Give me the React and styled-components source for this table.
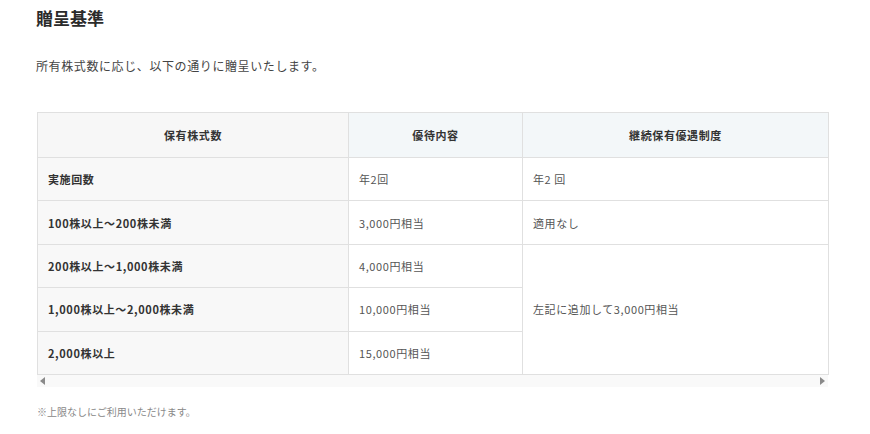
import React from "react";
import styled, { createGlobalStyle } from "styled-components";

const GlobalStyle = createGlobalStyle`
  html, body {
    margin: 0;
    padding: 0;
    background: #ffffff;
  }
  body {
    font-family: "Noto Sans CJK JP", "Noto Sans", sans-serif;
    color: #333;
  }
`;

const Page = styled.main`
  padding: 6px 42px 0 36px;
`;

const Title = styled.h2`
  margin: 0;
  font-size: 17px;
  line-height: 24px;
  font-weight: 700;
  color: #2b2b2b;
`;

const Lead = styled.p`
  margin: 26px 0 0;
  font-size: 12px;
  line-height: 20px;
  letter-spacing: 0.6px;
  color: #444;
`;

const Scroller = styled.div`
  margin: 36px 0 0 1px;
`;

const Table = styled.table`
  width: 791px;
  border-collapse: collapse;
  table-layout: fixed;
  font-size: 11px;
  letter-spacing: 0.6px;
`;

const Head = styled.th`
  height: 44px;
  padding: 0 10px;
  border: 1px solid #e0e0e0;
  background: ${(p) => (p.$tint ? "#f3f7f9" : "#f7f7f7")};
  color: #333;
  font-weight: 700;
  text-align: center;
`;

const Cell = styled.td`
  height: ${(p) => (p.$tall ? "auto" : "42.4px")};
  padding: 0 10px;
  border: 1px solid #e0e0e0;
  background: ${(p) => (p.$label ? "#f8f8f8" : "#ffffff")};
  color: ${(p) => (p.$label ? "#333" : "#555")};
  font-weight: ${(p) => (p.$label ? 700 : 400)};
  text-align: left;
  vertical-align: middle;
`;

const ScrollBar = styled.div`
  display: flex;
  align-items: center;
  justify-content: space-between;
  width: 791px;
  height: 12px;
  padding: 0 3px;
  box-sizing: border-box;
  background: #f9f9f9;
`;

const Arrow = styled.span`
  width: 0;
  height: 0;
  border-top: 4px solid transparent;
  border-bottom: 4px solid transparent;
  ${(p) =>
    p.$dir === "left"
      ? "border-right: 5px solid #8a8a8a;"
      : "border-left: 5px solid #8a8a8a;"}
`;

const Note = styled.p`
  margin: 17px 0 0 1px;
  font-size: 10px;
  line-height: 16px;
  color: #888;
`;

const rows = [
  { label: "100株以上～200株未満", value: "3,000円相当", extra: "適用なし" },
  { label: "200株以上～1,000株未満", value: "4,000円相当", extra: "左記に追加して3,000円相当", span: 3 },
  { label: "1,000株以上～2,000株未満", value: "10,000円相当" },
  { label: "2,000株以上", value: "15,000円相当" },
];

export default function App() {
  return (
    <>
      <GlobalStyle />
      <Page>
        <Title>贈呈基準</Title>
        <Lead>所有株式数に応じ、以下の通りに贈呈いたします。</Lead>
        <Scroller>
          <Table>
            <colgroup>
              <col style={{ width: 311 }} />
              <col style={{ width: 174 }} />
              <col style={{ width: 306 }} />
            </colgroup>
            <thead>
              <tr>
                <Head>保有株式数</Head>
                <Head $tint>優待内容</Head>
                <Head $tint>継続保有優遇制度</Head>
              </tr>
            </thead>
            <tbody>
              <tr>
                <Cell $label>実施回数</Cell>
                <Cell>年2回</Cell>
                <Cell>年2 回</Cell>
              </tr>
              {rows.map((r) => (
                <tr key={r.label}>
                  <Cell $label>{r.label}</Cell>
                  <Cell>{r.value}</Cell>
                  {r.extra && (
                    <Cell rowSpan={r.span || 1} $tall={!!r.span}>
                      {r.extra}
                    </Cell>
                  )}
                </tr>
              ))}
            </tbody>
          </Table>
          <ScrollBar>
            <Arrow $dir="left" />
            <Arrow $dir="right" />
          </ScrollBar>
        </Scroller>
        <Note>※上限なしにご利用いただけます。</Note>
      </Page>
    </>
  );
}
